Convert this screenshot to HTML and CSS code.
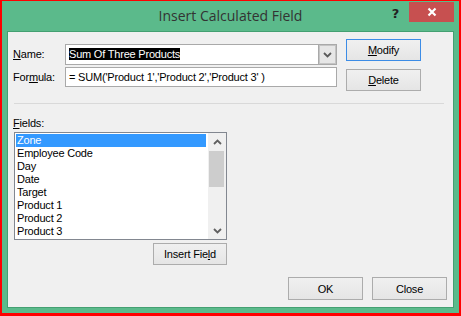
FILE: index.html
```html
<!DOCTYPE html>
<html lang="en">
<head>
  <meta charset="UTF-8">
  <title>Insert Calculated Field</title>
  <link rel="stylesheet" href="styles.css">
</head>
<body>

  <div class="window">
    <div class="titlebar">
      <span class="title">Insert Calculated Field</span>
      <div class="title-actions">
        <span class="help">?</span>
        <button class="close-x">
          <svg width="10" height="10" viewBox="0 0 10 10"><path d="M1.5 1.5 L8.5 8.5 M8.5 1.5 L1.5 8.5" stroke="#fff" stroke-width="2.2" fill="none"/></svg>
        </button>
      </div>
    </div>

    <div class="panel">
      <div class="top">
        <div class="form">
          <div class="row">
            <label class="lbl"><u>N</u>ame:</label>
            <div class="combo">
              <span class="combo-text"><span class="sel">Sum Of Three Products</span></span>
              <span class="combo-btn">
                <svg width="9" height="6" viewBox="0 0 9 6"><path d="M1 1 L4.5 4.5 L8 1" stroke="#5a5a5a" stroke-width="1.8" fill="none"/></svg>
              </span>
            </div>
          </div>
          <div class="row row-formula">
            <label class="lbl">For<u>m</u>ula:</label>
            <div class="textbox">= SUM('Product 1','Product 2','Product 3' )</div>
          </div>
        </div>
        <div class="side-buttons">
          <button class="btn btn-default"><u>M</u>odify</button>
          <button class="btn"><u>D</u>elete</button>
        </div>
      </div>

      <div class="separator"></div>

      <div class="fields">
        <label class="lbl"><u>F</u>ields:</label>
        <div class="listbox">
          <ul class="items">
            <li class="item selected">Zone</li>
            <li class="item">Employee Code</li>
            <li class="item">Day</li>
            <li class="item">Date</li>
            <li class="item">Target</li>
            <li class="item">Product 1</li>
            <li class="item">Product 2</li>
            <li class="item">Product 3</li>
          </ul>
          <div class="scrollbar">
            <span class="scroll-arrow">
              <svg width="9" height="6" viewBox="0 0 9 6"><path d="M1 5 L4.5 1.5 L8 5" stroke="#606060" stroke-width="1.8" fill="none"/></svg>
            </span>
            <span class="scroll-thumb"></span>
            <span class="scroll-arrow scroll-down">
              <svg width="9" height="6" viewBox="0 0 9 6"><path d="M1 1 L4.5 4.5 L8 1" stroke="#606060" stroke-width="1.8" fill="none"/></svg>
            </span>
          </div>
        </div>
        <button class="btn btn-insert">Insert Fie<u>l</u>d</button>
      </div>

      <div class="footer">
        <button class="btn btn-footer">OK</button>
        <button class="btn btn-footer">Close</button>
      </div>
    </div>
  </div>

</body>
</html>
```

FILE: styles.css
```css
body {
  margin: 0;
  font-family: "Liberation Sans", Arial, sans-serif;
  font-size: 11px;
  letter-spacing: -0.2px;
  color: #000;
}
.window {
  width: 461px;
  height: 316px;
  box-sizing: border-box;
  border: 2px solid #ff0000;
  border-top-width: 1px;
  border-bottom-width: 3px;
  background-color: #5bba8b;
  display: flex;
  flex-direction: column;
}
.titlebar {
  height: 30px;
  flex: none;
  display: grid;
  grid-template-columns: 1fr auto 1fr;
  align-items: start;
}
.title {
  grid-column: 2;
  font-family: "Open Sans", "Noto Sans", sans-serif;
  font-size: 14px;
  letter-spacing: 0;
  line-height: 30px;
  color: #333;
}
.title-actions {
  grid-column: 3;
  display: flex;
  justify-content: flex-end;
  align-items: flex-start;
}
.help {
  font-family: "DejaVu Sans", sans-serif;
  font-weight: bold;
  font-size: 13px;
  line-height: 14px;
  margin-top: 6px;
  margin-right: 10px;
  color: #222;
}
.close-x {
  width: 45px;
  height: 20px;
  margin-top: 1px;
  margin-right: 5px;
  padding: 0;
  border: none;
  background-color: #c75050;
  display: flex;
  justify-content: center;
  align-items: center;
}
.panel {
  flex: 1;
  margin: 0 5px 5px;
  border: 1px solid #44a072;
  background-color: #f0f0f0;
  display: flex;
  flex-direction: column;
}
.top {
  display: flex;
  padding: 7px 0 0 5px;
}
.form {
  padding-top: 5px;
}
.row {
  display: flex;
  align-items: center;
  height: 21px;
}
.row-formula {
  margin-top: 2px;
  height: 20px;
}
.lbl {
  width: 52px;
  line-height: 13px;
}
.combo {
  width: 272px;
  height: 21px;
  box-sizing: border-box;
  border: 1px solid #a9a9a9;
  background-color: #fff;
  display: flex;
}
.combo-text {
  flex: 1;
  padding: 3px 0 0 3px;
  line-height: 13px;
}
.sel {
  background-color: #000;
  color: #fff;
}
.combo-btn {
  width: 17px;
  background-color: #e6e6e6;
  border-left: 1px solid #a9a9a9;
  box-shadow: inset 0 0 0 1px #c4c4c4;
  display: flex;
  justify-content: center;
  align-items: center;
}
.textbox {
  width: 272px;
  height: 20px;
  box-sizing: border-box;
  border: 1px solid #a9a9a9;
  background-color: #fff;
  padding: 3px 0 0 3px;
  line-height: 13px;
}
.side-buttons {
  display: flex;
  flex-direction: column;
  gap: 8px;
  margin-left: 9px;
}
.btn {
  width: 75px;
  height: 22px;
  box-sizing: border-box;
  border: 1px solid #acacac;
  background: linear-gradient(#f0f0f0, #e5e5e5);
  font-family: inherit;
  font-size: 11px;
  letter-spacing: -0.2px;
  color: #000;
  padding: 0;
}
.btn-default {
  border-color: #3c8ce6;
}
.separator {
  margin: 12px 0 0 6px;
  width: 430px;
  height: 1px;
  background-color: #d9d9d9;
}
.fields {
  display: flex;
  flex-direction: column;
  width: 214px;
  padding-left: 5px;
  margin-top: 13px;
}
.listbox {
  margin: 2px 0 0 1px;
  width: 213px;
  height: 108px;
  box-sizing: border-box;
  border: 1px solid #828790;
  background-color: #fff;
  display: flex;
}
.items {
  list-style: none;
  margin: 0;
  padding: 1px 2px 0 1px;
  flex: 1;
}
.item {
  height: 13px;
  line-height: 13px;
  padding-left: 1px;
  white-space: nowrap;
}
.item.selected {
  background-color: #3399ff;
  color: #fff;
}
.scrollbar {
  width: 18px;
  background-color: #f0f0f0;
  display: flex;
  flex-direction: column;
}
.scroll-arrow {
  height: 17px;
  display: flex;
  justify-content: center;
  align-items: center;
}
.scroll-thumb {
  height: 36px;
  margin: 1px 2px 0 1px;
  background-color: #cdcdcd;
}
.scroll-down {
  margin-top: auto;
}
.btn-insert {
  align-self: flex-end;
  width: 74px;
  margin-top: 3px;
  margin-right: 0;
}
.footer {
  display: flex;
  justify-content: flex-end;
  gap: 9px;
  margin-top: 12px;
  padding-right: 6px;
}
.btn-footer {
  height: 23px;
}
```
